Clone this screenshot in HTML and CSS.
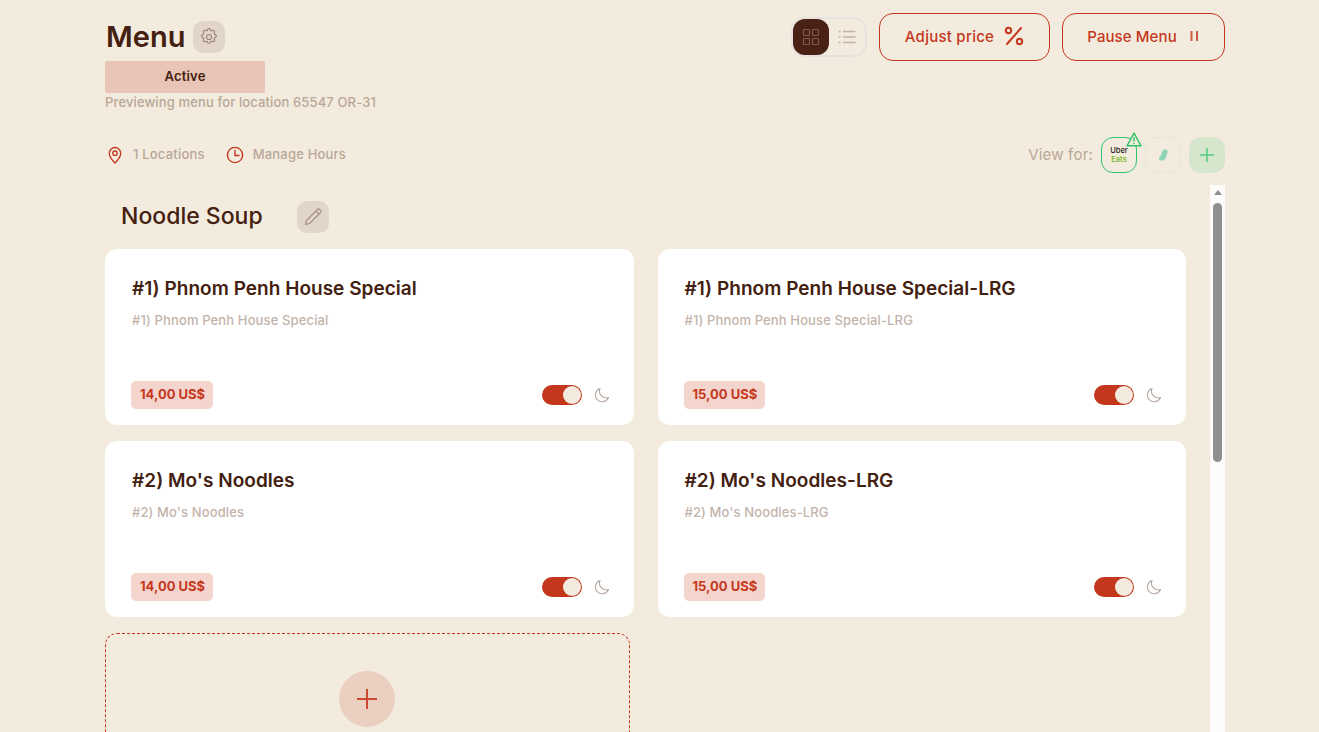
FILE: index.html
```html
<!DOCTYPE html>
<html lang="en">
<head>
  <meta charset="UTF-8" />
  <title>Menu</title>
  <link rel="stylesheet" href="styles.css">
</head>
<body>
  <div class="page">
    <!-- Header -->
    <div class="header">
      <div class="header-left">
        <div class="title-row">
          <h1>Menu</h1>
          <button class="icon-btn">
            <svg width="20" height="20" viewBox="0 0 24 24" fill="none" stroke="#9a8778" stroke-width="1.400" stroke-linejoin="round"><path d="M10.3 3.2c.4-1.6 2.9-1.6 3.3 0a1.7 1.7 0 0 0 2.6 1.1c1.4-.9 3.2.9 2.3 2.3a1.7 1.7 0 0 0 1.1 2.6c1.6.4 1.6 2.9 0 3.3a1.7 1.7 0 0 0-1.1 2.6c.9 1.4-.9 3.2-2.3 2.3a1.7 1.7 0 0 0-2.6 1.1c-.4 1.6-2.9 1.6-3.3 0a1.7 1.7 0 0 0-2.6-1.1c-1.4.9-3.2-.9-2.3-2.3a1.7 1.7 0 0 0-1.1-2.6c-1.6-.4-1.6-2.9 0-3.3a1.7 1.7 0 0 0 1.1-2.6c-.9-1.4.9-3.2 2.3-2.3a1.7 1.7 0 0 0 2.6-1.1z"/><circle cx="12" cy="12" r="3"/></svg>
          </button>
        </div>
        <div class="status">Active</div>
        <p class="preview-note">Previewing menu for location 65547 OR-31</p>
      </div>
      <div class="header-right">
        <div class="view-toggle">
          <span class="toggle-on">
            <svg width="18" height="18" viewBox="0 0 18 18" fill="none" stroke="#7f5c4b" stroke-width="1.200"><rect x="1.500" y="1.500" width="6" height="6" rx="1"/><rect x="10.500" y="1.500" width="6" height="6" rx="1"/><rect x="1.500" y="10.500" width="6" height="6" rx="1"/><rect x="10.500" y="10.500" width="6" height="6" rx="1"/></svg>
          </span>
          <span class="toggle-off">
            <svg width="18" height="14" viewBox="0 0 18 14" fill="none" stroke="#c4b5a8" stroke-width="1.500"><path d="M5 1.500h12.500M5 7h12.500M5 12.500h12.500"/><path d="M.5 1.500h2M.5 7h2M.5 12.500h2"/></svg>
          </span>
        </div>
        <button class="outline-btn adjust">Adjust price
          <svg width="20" height="20" viewBox="0 0 20 20" fill="none" stroke="#c4371c" stroke-width="2"><path d="M17 2 3 18" stroke-linecap="round"/><circle cx="4.500" cy="4.500" r="2.700"/><circle cx="15.500" cy="15.500" r="2.700"/></svg>
        </button>
        <button class="outline-btn pause">Pause Menu
          <svg width="10" height="12" viewBox="0 0 10 12" fill="#cf5a42"><rect x="0.500" y="1" width="2" height="10"/><rect x="6" y="1" width="2" height="10"/></svg>
        </button>
      </div>
    </div>

    <!-- Locations and platforms -->
    <div class="toolbar">
      <div class="toolbar-links">
        <span class="tool-link">
          <svg width="18" height="18" viewBox="0 0 18 18" fill="none" stroke="#c4371c" stroke-width="1.300"><path d="M9 17C6 14 3.300 11 3.300 7.200a5.700 5.700 0 0 1 11.400 0C14.700 11 12 14 9 17z" stroke-linejoin="round"/><circle cx="9" cy="7.200" r="2.200"/></svg>
          <span class="tool-text">1 Locations</span>
        </span>
        <span class="tool-link">
          <svg width="18" height="18" viewBox="0 0 18 18" fill="none" stroke="#c4371c" stroke-width="1.400"><circle cx="9" cy="9" r="7.600"/><path d="M9 4.500V9.500h4" stroke-linecap="round"/></svg>
          <span class="tool-text">Manage Hours</span>
        </span>
      </div>
      <div class="platforms">
        <span class="view-label">View for:</span>
        <span class="platform uber">
          <span class="uber-logo"><span>Uber</span><span class="eats">Eats</span></span>
          <span class="warn-badge">
            <svg width="16" height="15" viewBox="0 0 16 15" fill="#f3ebdd" stroke="#2ec36a" stroke-width="1.400"><path d="M8 1.200 15 13.800H1z" stroke-linejoin="round"/><path d="M8 5.200v4.300M8 10.800v1.300"/></svg>
          </span>
        </span>
        <span class="platform other">
          <svg width="12" height="14" viewBox="0 0 12 14" fill="#8fd6b6"><path d="M8 1.500c2 0 3 1 2.500 3-.3 1.400-1 2-1 3 0 2.500-2 5-4.500 5-2.200 0-3.500-1-3-2.600.4-1.300 1.500-1.500 2-2.800C5 5 5 1.500 8 1.500z"/></svg>
        </span>
        <span class="platform add">
          <svg width="16" height="16" viewBox="0 0 16 16" stroke="#4fce7e" stroke-width="1.500"><path d="M8 1v14M1 8h14"/></svg>
        </span>
      </div>
    </div>

    <!-- Category list -->
    <div class="body-row">
      <div class="content">
        <div class="category-row">
          <h2>Noodle Soup</h2>
          <button class="icon-btn">
            <svg width="20" height="20" viewBox="0 0 20 20" fill="none" stroke="#a39284" stroke-width="1.200" stroke-linejoin="round"><path d="M14.500 2.500c.6-.6 1.500-.6 2.100 0l.9.9c.6.6.6 1.500 0 2.100L6.500 16.500 2.500 17.500l1-4z"/><path d="M12.800 4.200l3 3"/></svg>
          </button>
        </div>
        <div class="grid">
          <div class="card">
            <h3>#1) Phnom Penh House Special</h3>
            <p class="desc">#1) Phnom Penh House Special</p>
            <div class="card-foot">
              <span class="price">14,00 US$</span>
              <div class="card-actions">
                <span class="switch"><span class="knob"></span></span>
                <svg class="moon" width="16" height="16" viewBox="0 0 16 16" fill="none" stroke="#b5a8a0" stroke-width="1.100"><path d="M6 1.500a6.800 6.800 0 0 0 8.500 9A6.800 6.800 0 1 1 6 1.500z" stroke-linejoin="round"/></svg>
              </div>
            </div>
          </div>
          <div class="card">
            <h3>#1) Phnom Penh House Special-LRG</h3>
            <p class="desc">#1) Phnom Penh House Special-LRG</p>
            <div class="card-foot">
              <span class="price">15,00 US$</span>
              <div class="card-actions">
                <span class="switch"><span class="knob"></span></span>
                <svg class="moon" width="16" height="16" viewBox="0 0 16 16" fill="none" stroke="#b5a8a0" stroke-width="1.100"><path d="M6 1.500a6.800 6.800 0 0 0 8.500 9A6.800 6.800 0 1 1 6 1.500z" stroke-linejoin="round"/></svg>
              </div>
            </div>
          </div>
          <div class="card">
            <h3>#2) Mo's Noodles</h3>
            <p class="desc">#2) Mo's Noodles</p>
            <div class="card-foot">
              <span class="price">14,00 US$</span>
              <div class="card-actions">
                <span class="switch"><span class="knob"></span></span>
                <svg class="moon" width="16" height="16" viewBox="0 0 16 16" fill="none" stroke="#b5a8a0" stroke-width="1.100"><path d="M6 1.500a6.800 6.800 0 0 0 8.500 9A6.800 6.800 0 1 1 6 1.500z" stroke-linejoin="round"/></svg>
              </div>
            </div>
          </div>
          <div class="card">
            <h3>#2) Mo's Noodles-LRG</h3>
            <p class="desc">#2) Mo's Noodles-LRG</p>
            <div class="card-foot">
              <span class="price">15,00 US$</span>
              <div class="card-actions">
                <span class="switch"><span class="knob"></span></span>
                <svg class="moon" width="16" height="16" viewBox="0 0 16 16" fill="none" stroke="#b5a8a0" stroke-width="1.100"><path d="M6 1.500a6.800 6.800 0 0 0 8.500 9A6.800 6.800 0 1 1 6 1.500z" stroke-linejoin="round"/></svg>
              </div>
            </div>
          </div>
          <div class="add-card">
            <span class="add-circle">
              <svg width="20" height="20" viewBox="0 0 20 20" stroke="#c9482e" stroke-width="2"><path d="M10 0v20M0 10h20"/></svg>
            </span>
          </div>
        </div>
      </div>
      <div class="scrollbar">
        <span class="scroll-up"></span>
        <span class="scroll-thumb"></span>
      </div>
    </div>
  </div>
</body>
</html>
```

FILE: styles.css
```css
html, body {
  height: 100%;
}

body {
  margin: 0;
  overflow: hidden;
  font-family: 'Inter', 'Liberation Sans', sans-serif;
  background: #f3ebdd;
  color: #43200f;
}

.page {
  width: 1120px;
  margin-left: 105px;
  height: 732px;
  display: flex;
  flex-direction: column;
}

button {
  font-family: inherit;
  cursor: pointer;
}

/* Header */
.header {
  display: flex;
  justify-content: space-between;
  align-items: flex-start;
  padding-top: 13px;
  height: 112px;
  box-sizing: border-box;
}

.title-row {
  display: flex;
  align-items: center;
  gap: 8px;
  height: 48px;
}

h1 {
  margin: 0 0 0 1px;
  font-size: 29px;
  font-weight: 600;
  line-height: 46px;
}

.icon-btn {
  width: 32px;
  height: 32px;
  padding: 0;
  border: none;
  border-radius: 10px;
  background: #e2d6ca;
  display: flex;
  align-items: center;
  justify-content: center;
}

.status {
  width: 160px;
  height: 32px;
  box-sizing: border-box;
  background: #e8c5b6;
  border-radius: 2px 0 0 2px;
  text-align: center;
  font-size: 13px;
  font-weight: 600;
  letter-spacing: 0.2px;
  line-height: 30px;
}

.preview-note {
  margin: 0;
  font-size: 13px;
  font-weight: 500;
  letter-spacing: 0.13px;
  line-height: 18px;
  color: #b9a797;
}

.header-right {
  display: flex;
  align-items: center;
  gap: 12px;
}

.view-toggle {
  display: flex;
  align-items: center;
  width: 76px;
  height: 40px;
  box-sizing: border-box;
  border: 2px solid #e6e3df;
  border-radius: 14px;
}

.toggle-on {
  width: 36px;
  height: 36px;
  background: #4a2115;
  border-radius: 12px;
  display: flex;
  align-items: center;
  justify-content: center;
}

.toggle-off {
  flex: 1;
  display: flex;
  align-items: center;
  justify-content: center;
}

.outline-btn {
  height: 48px;
  box-sizing: border-box;
  padding: 0 0 2px;
  border: 1px solid #c4371c;
  border-radius: 14px;
  background: transparent;
  color: #c4371c;
  font-size: 15px;
  font-weight: 500;
  letter-spacing: 0.1px;
  display: flex;
  align-items: center;
  justify-content: center;
}

.adjust {
  width: 171px;
  gap: 10px;
  letter-spacing: 0.25px;
}

.pause {
  width: 163px;
  gap: 13px;
}

/* Toolbar */
.toolbar {
  display: flex;
  justify-content: space-between;
  align-items: center;
  height: 36px;
  margin-top: 25px;
}

.toolbar-links {
  display: flex;
  gap: 21px;
  padding-left: 1px;
}

.tool-link {
  display: flex;
  align-items: center;
  gap: 9px;
  font-size: 13px;
  font-weight: 500;
  letter-spacing: 0.2px;
  color: #b9a797;
}

.tool-text {
  padding-bottom: 2px;
}

.platforms {
  display: flex;
  align-items: center;
  gap: 8px;
}

.view-label {
  padding-bottom: 2px;
  font-size: 15px;
  letter-spacing: 0.2px;
  color: #b9a797;
}

.platform {
  position: relative;
  width: 36px;
  height: 36px;
  box-sizing: border-box;
  border-radius: 12px;
  display: flex;
  align-items: center;
  justify-content: center;
}

.uber {
  border: 1px solid #2ec36a;
}

.uber-logo {
  display: flex;
  flex-direction: column;
  align-items: center;
  font-size: 7.500px;
  font-weight: 500;
  line-height: 9px;
  color: #222;
}

.eats {
  color: #7dbb2f;
  font-weight: 600;
}

.warn-badge {
  position: absolute;
  top: -6px;
  right: -6px;
  display: flex;
}

.other {
  border: 1px solid #ece2d7;
}

.add {
  background: #d5e6cd;
}

/* Category list */
.body-row {
  display: flex;
  flex: 1;
  min-height: 0;
  margin-top: 12px;
  gap: 24px;
}

.content {
  flex: 1;
  min-width: 0;
}

.category-row {
  display: flex;
  align-items: center;
  gap: 34px;
  height: 32px;
  padding: 0 0 0 16px;
  margin: 16px 0;
}

h2 {
  margin: 0;
  padding-bottom: 2px;
  font-size: 23px;
  font-weight: 500;
}

.grid {
  display: grid;
  grid-template-columns: 1fr 1fr;
  column-gap: 24px;
  row-gap: 16px;
}

.card {
  height: 176px;
  box-sizing: border-box;
  background: #fff;
  border-radius: 12px;
  padding: 27px 24px 16px 27px;
  display: flex;
  flex-direction: column;
}

h3 {
  margin: 0;
  font-size: 19px;
  font-weight: 600;
  letter-spacing: 0.03px;
  line-height: 26px;
}

.desc {
  margin: 9px 0 0;
  font-size: 13px;
  font-weight: 500;
  letter-spacing: 0.13px;
  line-height: 18px;
  color: #c2b4ab;
}

.card-foot {
  margin-top: auto;
  display: flex;
  justify-content: space-between;
  align-items: center;
}

.price {
  margin-left: -1px;
  height: 28px;
  padding: 0 8px 0 9px;
  border-radius: 5px;
  background: #f4d5ce;
  color: #c4371c;
  font-size: 13px;
  font-weight: 700;
  line-height: 27px;
}

.card-actions {
  display: flex;
  align-items: center;
  gap: 12px;
}

.switch {
  width: 40px;
  height: 20px;
  border-radius: 10px;
  background: #c4371c;
  display: flex;
  justify-content: flex-end;
  align-items: center;
  padding-right: 1px;
  box-sizing: border-box;
}

.knob {
  width: 18px;
  height: 18px;
  border-radius: 50%;
  background: #f3ebdd;
}

.add-card {
  width: 525px;
  height: 176px;
  box-sizing: border-box;
  border: 1px dashed #c4371c;
  border-radius: 12px;
  padding: 37px 2px 0 0;
  display: flex;
  justify-content: center;
  align-items: flex-start;
}

.add-circle {
  width: 56px;
  height: 56px;
  border-radius: 50%;
  background: #ebcfc1;
  display: flex;
  align-items: center;
  justify-content: center;
}

.scrollbar {
  width: 15px;
  flex-shrink: 0;
  background: #fdfcfb;
  display: flex;
  flex-direction: column;
  align-items: center;
}

.scroll-up {
  margin-top: 5px;
  width: 0;
  height: 0;
  border-left: 4.500px solid transparent;
  border-right: 4.500px solid transparent;
  border-bottom: 5px solid #8f8f8f;
}

.scroll-thumb {
  margin-top: 8px;
  width: 9px;
  height: 259px;
  border-radius: 5px;
  background: #8f8f8f;
}
```
